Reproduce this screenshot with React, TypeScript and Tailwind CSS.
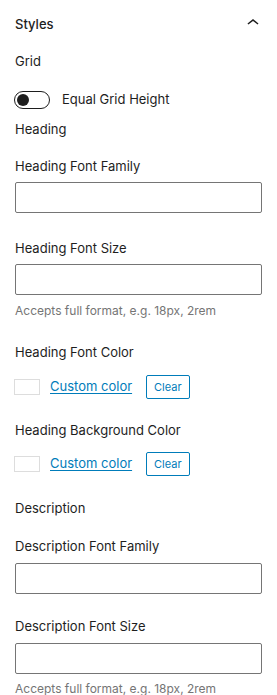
import React, { useState } from "react";

const font = { fontFamily: '"Inter", "Noto Sans", sans-serif' };

function Label({ children, className = "" }: { children: React.ReactNode; className?: string }) {
  return <div className={`text-[13px] leading-5 text-[#1e1e1e] ${className}`}>{children}</div>;
}

function TextInput({ className = "" }: { className?: string }) {
  return (
    <input
      className={`block h-[31px] w-[247px] rounded-[2px] border border-[#757575] bg-white px-2 text-[13px] ${className}`}
    />
  );
}

function Help({ className = "" }: { className?: string }) {
  return <div className={`text-[12px] leading-4 text-[#757575] ${className}`}>Accepts full format, e.g. 18px, 2rem</div>;
}

function ColorRow({ className = "" }: { className?: string }) {
  return (
    <div className={`flex h-6 items-center ${className}`}>
      <span className="ml-[-1px] h-4 w-[26px] border border-[#dddddd] bg-white" />
      <a href="#" className="ml-[10px] text-[13px] text-[#007cba] underline underline-offset-2">
        Custom color
      </a>
      <button className="ml-[14px] h-6 rounded-[2px] border border-[#007cba] px-[7px] text-[11px] text-[#007cba]">
        Clear
      </button>
    </div>
  );
}

export default function App() {
  const [on, setOn] = useState(false);
  return (
    <div className="h-[695px] w-[277px] overflow-hidden bg-white" style={font}>
      <button className="flex h-[46px] w-full items-center justify-between pl-[15px] pr-[15px]">
        <span className="mt-[3px] text-[13px] font-medium text-[#1e1e1e]">Styles</span>
        <svg width="24" height="24" viewBox="0 0 24 24" className="mr-[-3px]">
          <path d="M6.5 12.4L12 8l5.5 4.4-.9 1.2L12 10l-4.6 3.6-1-1.2z" fill="#1e1e1e" />
        </svg>
      </button>
      <div className="px-[15px] pt-[1px]">
        <Label className="mt-[4px]">Grid</Label>
        <div className="mt-[20px] flex h-[18px] items-center">
          <button
            onClick={() => setOn(!on)}
            className="relative ml-[-1px] h-[18px] w-[36px] rounded-full border border-[#1e1e1e] bg-white"
          >
            <span className="absolute left-[2px] top-[2px] h-3 w-3 rounded-full bg-[#1e1e1e]" />
          </button>
          <span className="ml-[12px] text-[13px] text-[#1e1e1e]">Equal Grid Height</span>
        </div>
        <Label className="mt-[10px]">Heading</Label>
        <Label className="mt-[17px]">Heading Font Family</Label>
        <TextInput className="mt-[6px]" />
        <Label className="mt-[25px]">Heading Font Size</Label>
        <TextInput className="mt-[6px]" />
        <Help className="mt-[8px]" />
        <Label className="mt-[23px]">Heading Font Color</Label>
        <ColorRow className="mt-[13px]" />
        <Label className="mt-[21px]">Heading Background Color</Label>
        <ColorRow className="mt-[12px]" />
        <Label className="mt-[22px]">Description</Label>
        <Label className="mt-[18px]">Description Font Family</Label>
        <TextInput className="mt-[7px]" />
        <Label className="mt-[22px]">Description Font Size</Label>
        <TextInput className="mt-[7px]" />
        <Help className="mt-[7px]" />
      </div>
    </div>
  );
}
